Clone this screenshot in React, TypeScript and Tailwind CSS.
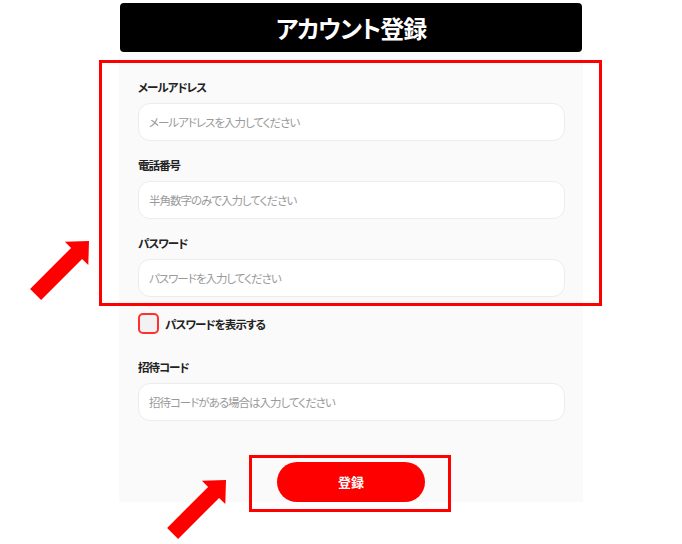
import React from "react";

const font = {
  fontFamily: '"Noto Sans CJK JP", "Noto Sans", sans-serif',
};

function Field({ label, placeholder }: { label: string; placeholder: string }) {
  return (
    <div className="flex flex-col">
      <label className="h-4 text-[11.5px] leading-4 font-bold tracking-[-1px] text-[#222] [font-feature-settings:'palt']">
        {label}
      </label>
      <input
        className="mt-2 h-[38px] w-full rounded-[12px] border border-[#ececec] bg-white px-[10px] text-[11.5px] tracking-[-1px] text-[#333] outline-none placeholder:text-[#9a9a9a] [font-feature-settings:'palt']"
        placeholder={placeholder}
      />
    </div>
  );
}

function Arrow({ dx, dy }: { dx: number; dy: number }) {
  return (
    <polygon
      transform={`translate(${dx} ${dy})`}
      fill="#ff0000"
      points="89,241 88.3,265.1 82.1,258.9 41.1,299.9 30.1,288.9 71.1,247.9 64.9,241.7"
    />
  );
}

export default function App() {
  return (
    <div className="relative h-[544px] w-[682px] overflow-hidden bg-white" style={font}>
      <div className="ml-[119px] w-[464px] pt-[3px]">
        <div className="mx-px flex h-[49px] items-center justify-center rounded-[4px] bg-black">
          <span className="text-[24px] font-bold leading-none tracking-[-1px] text-white [font-feature-settings:'palt']">
            アカウント登録
          </span>
        </div>
        <div className="flex h-[450px] flex-col bg-[#fafafa] pl-[19px] pr-[18px] pt-[27px]">
          <div className="flex flex-col gap-4">
            <Field label="メールアドレス" placeholder="メールアドレスを入力してください" />
            <Field label="電話番号" placeholder="半角数字のみで入力してください" />
            <Field label="パスワード" placeholder="パスワードを入力してください" />
          </div>
          <div className="mt-4 flex h-[21px] items-center gap-[6px]">
            <div className="h-[21px] w-[21px] rounded-[5px] border-2 border-[#ff3030] bg-[#f2f2f2]" />
            <span className="text-[11.5px] font-bold leading-4 tracking-[-0.9px] text-[#222] [font-feature-settings:'palt']">
              パスワードを表示する
            </span>
          </div>
          <div className="mt-[25px]">
            <Field label="招待コード" placeholder="招待コードがある場合は入力してください" />
          </div>
          <div className="mt-[41px] flex justify-center pr-[1px]">
            <button className="h-[40px] w-[148px] rounded-full bg-[#ff0000] text-[13px] font-bold text-white">
              登録
            </button>
          </div>
        </div>
      </div>

      {/* annotation overlays */}
      <div className="pointer-events-none absolute left-[99px] top-[60px] h-[246px] w-[503px] border-[3px] border-[#ff0000]" />
      <div className="pointer-events-none absolute left-[249px] top-[455px] h-[57px] w-[202px] border-[3px] border-[#ff0000]" />
      <svg className="pointer-events-none absolute left-0 top-0" width="682" height="544">
        <Arrow dx={0} dy={0} />
        <Arrow dx={137} dy={239} />
      </svg>
    </div>
  );
}
